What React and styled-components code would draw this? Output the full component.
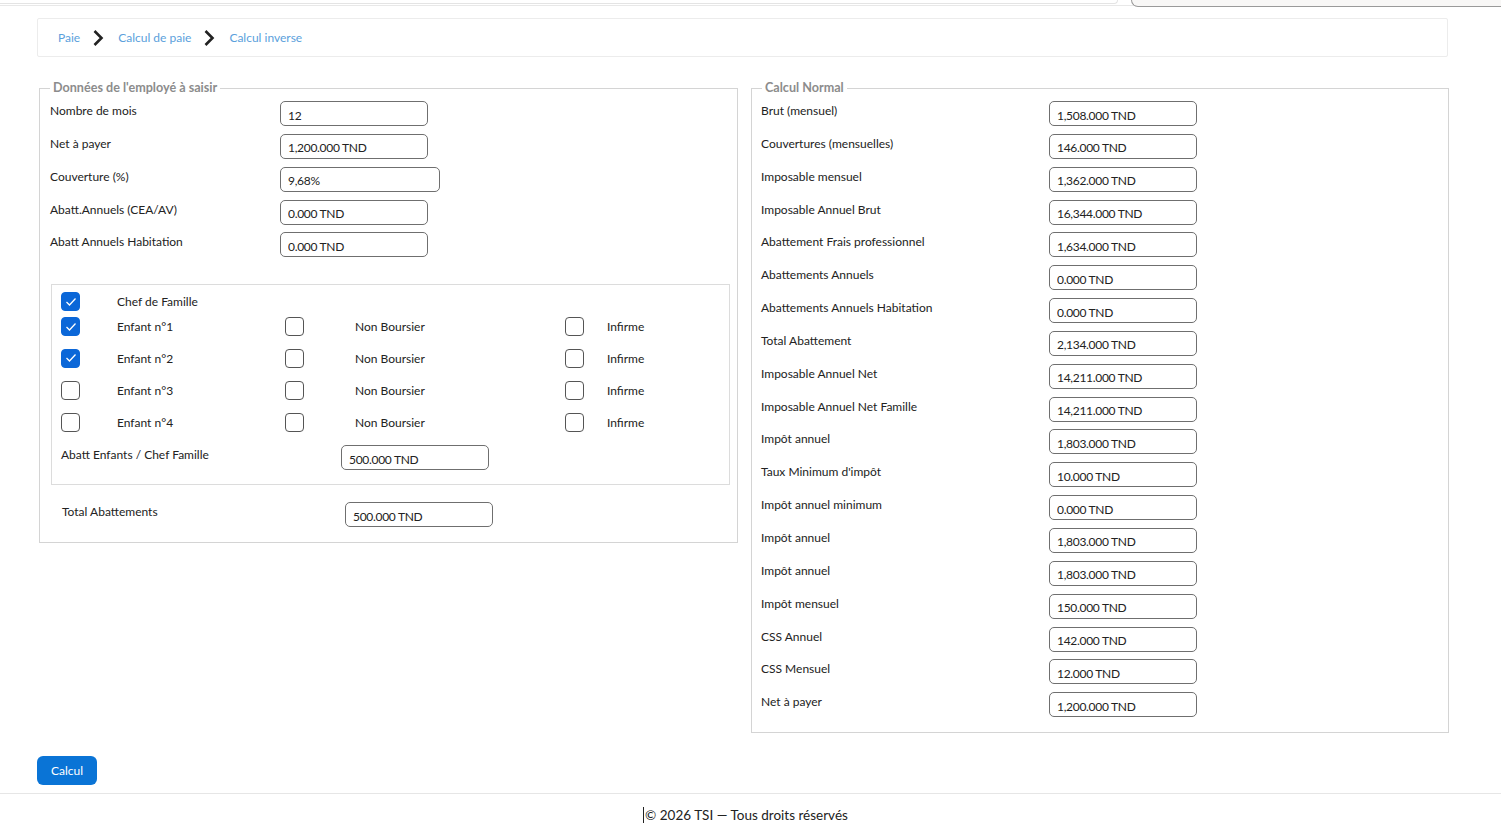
import React from "react";
import styled, { createGlobalStyle } from "styled-components";

const GlobalStyle = createGlobalStyle`
  html, body {
    margin: 0;
    padding: 0;
    background: #fff;
  }
  body {
    font-family: Lato, "Noto Sans", Arial, sans-serif;
    font-size: 12px;
    color: #222;
  }
  * { box-sizing: border-box; }
`;

const Page = styled.div`
  min-height: 823px;
  display: flex;
  flex-direction: column;
`;

const TopStrip = styled.div`
  display: flex;
  height: 6px;
  border-bottom: 1px solid #e8e8e8;
`;

const TopLeft = styled.div`
  flex: 1;
  height: 4px;
  border-right: 1px solid #e4e4e4;
  border-bottom: 1px solid #e4e4e4;
  border-bottom-right-radius: 10px;
`;

const TopRight = styled.div`
  width: 370px;
  margin-left: 13px;
  height: 7px;
  background: #f8f7f6;
  border: 1px solid #9a9a9a;
  border-top: none;
  border-right: none;
  border-bottom-left-radius: 10px;
`;

const Main = styled.main`
  width: 1412px;
  margin: 12px 0 0 37px;
`;

const Breadcrumb = styled.nav`
  display: flex;
  align-items: center;
  height: 39px;
  padding-left: 20px;
  border: 1px solid #ececec;
  border-radius: 2px;
  margin-right: 1px;
`;

const Crumb = styled.a`
  color: #5b9fdc;
  text-decoration: none;
  font-size: 12px;
`;

const Chevron = styled.svg`
  width: 12px;
  height: 18px;
  margin: 0 14px 0 12px;
`;

const Columns = styled.div`
  display: flex;
  align-items: flex-start;
  gap: 13px;
  margin: 24px 0 0 2px;
`;

const Fieldset = styled.fieldset`
  width: ${(p) => p.$width}px;
  margin: 0;
  padding: 0 10px 15px ${(p) => p.$padLeft || 10}px;
  border: 1px solid #d4d4d4;
  display: flex;
  flex-direction: column;
  gap: 7.85px;
`;

const Legend = styled.legend`
  padding: 0 3px;
  margin-left: ${(p) => p.$shift || 0}px;
  color: #8c8c8c;
  font-weight: 700;
  font-size: 12.6px;
  line-height: 14px;
  margin-bottom: 6px;
`;

const Row = styled.div`
  display: flex;
  align-items: flex-start;
  margin-left: ${(p) => p.$indent || 0}px;
  margin-top: ${(p) => p.$top || 0}px;
`;

const Label = styled.span`
  width: ${(p) => p.$width}px;
  flex-shrink: 0;
  padding-top: 2px;
  font-size: 12px;
  color: #222;
`;

const Field = styled.input`
  width: ${(p) => p.$width || 148}px;
  height: 25px;
  border: 1px solid #6f6f6f;
  border-radius: 5px;
  padding: 3px 7px 0;
  font-family: inherit;
  font-size: 12px;
  letter-spacing: -0.3px;
  color: #222;
  background: #fff;
  outline: none;
`;

const FamilyBox = styled.div`
  margin: 19px -3px 0 1px;
  padding: 7px 10px 14px 9px;
  border: 1px solid #dcdcdc;
  display: grid;
  grid-template-columns: 56px 168px 70px 210px 42px 1fr;
  grid-template-rows: 19px 31px 32px 32px 32px;
  grid-auto-rows: auto;
  align-items: center;
`;

const Check = styled.span`
  width: 19px;
  height: 19px;
  border-radius: 4px;
  display: flex;
  align-items: center;
  justify-content: center;
  background: ${(p) => (p.$on ? "#0b67d8" : "#fff")};
  border: 1px solid ${(p) => (p.$on ? "#0b67d8" : "#555")};
`;

const CheckLabel = styled.span`
  font-size: 12px;
  color: #222;
`;

const AbattRow = styled.div`
  grid-column: 1 / -1;
  display: flex;
  align-items: flex-start;
  margin-top: 7px;
`;

const Actions = styled.div`
  margin: 23px 0 8px;
`;

const Button = styled.button`
  height: 29px;
  padding: 0 14px;
  background: #0a74d6;
  color: #fff;
  border: none;
  border-radius: 6px;
  font-family: inherit;
  font-size: 12px;
`;

const Footer = styled.footer`
  border-top: 1px solid #e6e6e6;
  text-align: center;
  padding: 13px 10px 0 0;
  font-size: 13.5px;
  line-height: 16px;
  color: #222;
`;

const Caret = styled.span`
  display: inline-block;
  width: 1px;
  height: 16px;
  background: #222;
  vertical-align: -3px;
  margin-right: 1px;
`;

const CheckMark = () => (
  <svg width="12" height="10" viewBox="0 0 12 10">
    <polyline points="1.5,5 4.5,8 10.5,1.5" fill="none" stroke="#fff" strokeWidth="1.3" />
  </svg>
);

const Box = ({ on }) => <Check $on={on}>{on && <CheckMark />}</Check>;

const Arrow = () => (
  <Chevron viewBox="0 0 12 18">
    <polyline points="2.5,2 9.5,9 2.5,16" fill="none" stroke="#222" strokeWidth="2.6" />
  </Chevron>
);

const inputs = [
  ["Nombre de mois", "12"],
  ["Net à payer", "1,200.000 TND"],
  ["Couverture (%)", "9,68%", 160],
  ["Abatt.Annuels (CEA/AV)", "0.000 TND"],
  ["Abatt Annuels Habitation", "0.000 TND"],
];

const results = [
  ["Brut (mensuel)", "1,508.000 TND"],
  ["Couvertures (mensuelles)", "146.000 TND"],
  ["Imposable mensuel", "1,362.000 TND"],
  ["Imposable Annuel Brut", "16,344.000 TND"],
  ["Abattement Frais professionnel", "1,634.000 TND"],
  ["Abattements Annuels", "0.000 TND"],
  ["Abattements Annuels Habitation", "0.000 TND"],
  ["Total Abattement", "2,134.000 TND"],
  ["Imposable Annuel Net", "14,211.000 TND"],
  ["Imposable Annuel Net Famille", "14,211.000 TND"],
  ["Impôt annuel", "1,803.000 TND"],
  ["Taux Minimum d'impôt", "10.000 TND"],
  ["Impôt annuel minimum", "0.000 TND"],
  ["Impôt annuel", "1,803.000 TND"],
  ["Impôt annuel", "1,803.000 TND"],
  ["Impôt mensuel", "150.000 TND"],
  ["CSS Annuel", "142.000 TND"],
  ["CSS Mensuel", "12.000 TND"],
  ["Net à payer", "1,200.000 TND"],
];

const children = [true, true, false, false];

export default function App() {
  return (
    <Page>
      <GlobalStyle />
      <TopStrip>
        <TopLeft />
        <TopRight />
      </TopStrip>
      <Main>
        <Breadcrumb>
          <Crumb href="#">Paie</Crumb>
          <Arrow />
          <Crumb href="#">Calcul de paie</Crumb>
          <Arrow />
          <Crumb href="#">Calcul inverse</Crumb>
        </Breadcrumb>

        <Columns>
          <Fieldset $width={699}>
            <Legend>Données de l'employé à saisir</Legend>
            {inputs.map(([label, value, w]) => (
              <Row key={label}>
                <Label $width={230}>{label}</Label>
                <Field readOnly value={value} $width={w} />
              </Row>
            ))}
            <FamilyBox>
              <Box on />
              <CheckLabel>Chef de Famille</CheckLabel>
              <span />
              <span />
              <span />
              <span />
              {children.map((on, i) => (
                <React.Fragment key={i}>
                  <Box on={on} />
                  <CheckLabel>Enfant n°{i + 1}</CheckLabel>
                  <Box />
                  <CheckLabel>Non Boursier</CheckLabel>
                  <Box />
                  <CheckLabel>Infirme</CheckLabel>
                </React.Fragment>
              ))}
              <AbattRow>
                <Label $width={280}>Abatt Enfants / Chef Famille</Label>
                <Field readOnly value="500.000 TND" />
              </AbattRow>
            </FamilyBox>
            <Row $indent={12} $top={9}>
              <Label $width={283}>Total Abattements</Label>
              <Field readOnly value="500.000 TND" />
            </Row>
          </Fieldset>

          <Fieldset $width={698} $padLeft={9}>
            <Legend $shift={1}>Calcul Normal</Legend>
            {results.map(([label, value], i) => (
              <Row key={i}>
                <Label $width={288}>{label}</Label>
                <Field readOnly value={value} />
              </Row>
            ))}
          </Fieldset>
        </Columns>

        <Actions>
          <Button>Calcul</Button>
        </Actions>
      </Main>
      <Footer>
        <Caret />© 2026 TSI — Tous droits réservés
      </Footer>
    </Page>
  );
}
